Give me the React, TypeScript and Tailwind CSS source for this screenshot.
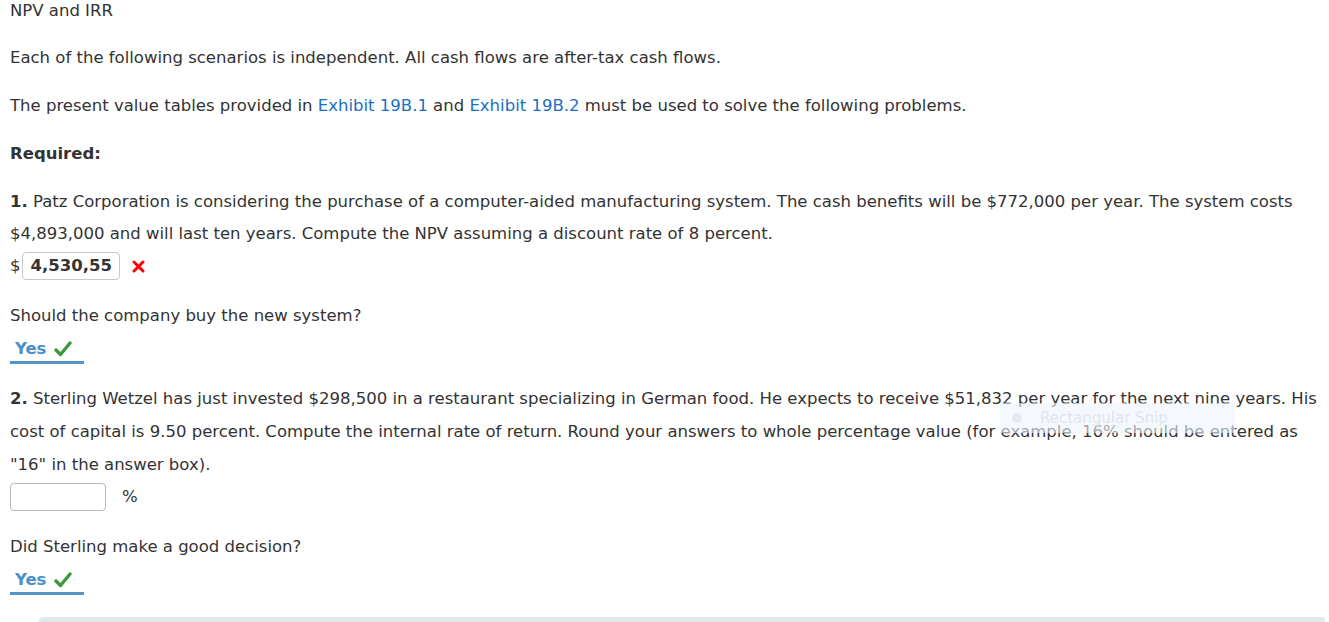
import React from "react"

const Yes = () => (
  <div className="flex h-[32px] w-[74px] items-center border-b-[3px] border-[#5394c8] pl-[5px] pt-[5px]">
    <span className="font-bold text-[#4a8fcc]">Yes</span>
    <svg width="18" height="16" viewBox="0 0 18 16" className="ml-[8px]">
      <path d="M2 9 L6.5 13.5 L16 2" fill="none" stroke="#3c9a3c" strokeWidth="3.4" strokeLinecap="round" strokeLinejoin="round" />
    </svg>
  </div>
)

export default function App() {
  return (
    <div
      className="relative h-[622px] overflow-hidden bg-white pl-[10px] pr-[4px] text-[16.5px] text-[#333]"
      style={{ fontFamily: "'DejaVu Sans', Verdana, sans-serif" }}
    >
      <p className="leading-[22px]">NPV and IRR</p>
      <p className="mt-[20px] leading-[32px]">
        Each of the following scenarios is independent. All cash flows are after-tax cash flows.
      </p>
      <p className="mt-[16px] leading-[32px]">
        The present value tables provided in <span className="text-[#1a6fc4]">Exhibit 19B.1</span> and{" "}
        <span className="text-[#1a6fc4]">Exhibit 19B.2</span> must be used to solve the following problems.
      </p>
      <p className="mt-[16px] font-bold leading-[32px]">Required:</p>

      <p className="mt-[16px] leading-[32px]">
        <b>1.</b> Patz Corporation is considering the purchase of a computer-aided manufacturing system. The cash
        benefits will be $772,000 per year. The system costs $4,893,000 and will last ten years. Compute the NPV
        assuming a discount rate of 8 percent.
      </p>
      <div className="flex h-[32px] items-center">
        <span>$</span>
        <div className="ml-[1px] flex h-[28px] w-[98px] items-center rounded-[4px] border border-[#c8c8c8] pl-[8px] font-bold">
          4,530,55
        </div>
        <svg width="13" height="13" viewBox="0 0 13 13" className="ml-[12px]">
          <path d="M2 2 L11 11 M11 2 L2 11" stroke="#f00" strokeWidth="3" strokeLinecap="round" />
        </svg>
      </div>

      <p className="mt-[18px] leading-[32px]">Should the company buy the new system?</p>
      <Yes />

      <p className="mt-[18px] leading-[33px]">
        <b>2.</b> Sterling Wetzel has just invested $298,500 in a restaurant specializing in German food. He expects
        to receive $51,832 per year for the next nine years. His cost of capital is 9.50 percent. Compute the internal
        rate of return. Round your answers to whole percentage value (for example, 16% should be entered as "16" in
        the answer box).
      </p>
      <div className="flex h-[32px] items-center">
        <div className="h-[28px] w-[96px] rounded-[4px] border border-[#b8b8b8]" />
        <span className="ml-[16px]">%</span>
      </div>

      <p className="mt-[18px] leading-[32px]">Did Sterling make a good decision?</p>
      <Yes />

      <div className="ml-[28px] mt-[22px] h-[20px] rounded-tl-[6px] rounded-tr-[3px] bg-[#e2e8eb]" />

      <div className="pointer-events-none absolute left-[1000px] top-[403px] flex h-[30px] w-[235px] items-center bg-[#eef5fc]/60 text-[15px] text-[#dfe5eb]">
        <span className="ml-[12px] h-[10px] w-[10px] rounded-full bg-[#e6eaee]" />
        <span className="ml-[18px]">Rectangular Snip</span>
      </div>
    </div>
  )
}
